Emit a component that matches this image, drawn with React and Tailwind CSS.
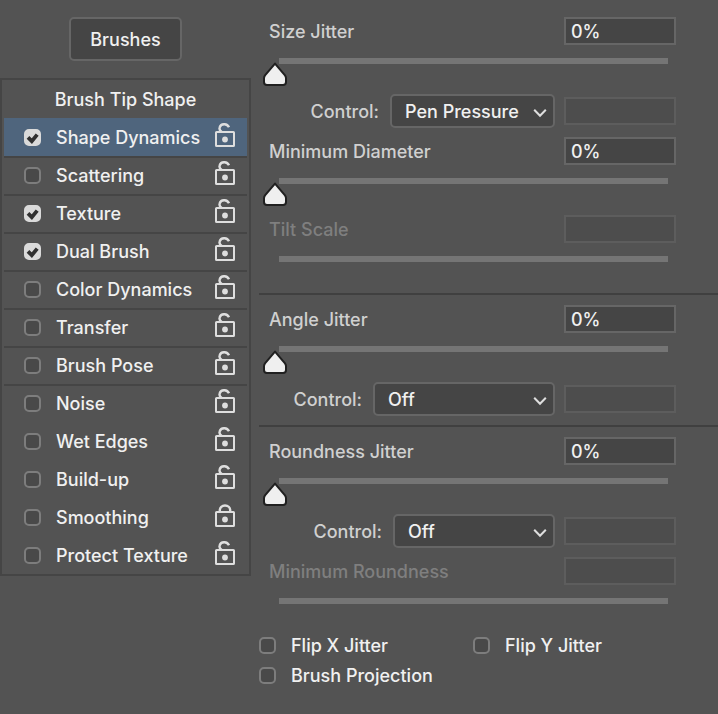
import React, { useState } from "react";

const brushOptions = [
  { name: "Shape Dynamics", checked: true, divider: false },
  { name: "Scattering", checked: false, divider: true },
  { name: "Texture", checked: true, divider: true },
  { name: "Dual Brush", checked: true, divider: true },
  { name: "Color Dynamics", checked: false, divider: true },
  { name: "Transfer", checked: false, divider: true },
  { name: "Brush Pose", checked: false, divider: true },
  { name: "Noise", checked: false, divider: true },
  { name: "Wet Edges", checked: false, divider: false },
  { name: "Build-up", checked: false, divider: false },
  { name: "Smoothing", checked: false, divider: false, locked: true },
  { name: "Protect Texture", checked: false, divider: false },
];

const LockIcon = ({ locked }) => (
  <svg width="20" height="28" viewBox="0 0 20 28" fill="none">
    <rect x="1" y="9" width="18" height="14" rx="0.6" stroke="currentColor" strokeWidth="2" />
    <circle cx="10" cy="16.5" r="2.9" fill="currentColor" />
    <path
      d={
        locked
          ? "M4.8 9V7.4C4.8 4.5 7 2.5 10 2.5s5.2 2 5.2 4.9V9"
          : "M6.8 9C4.7 7.8 4.2 6 4.7 4.4C5.3 2.3 7.3 1.1 9.6 1.2c2.1.1 3.5 1.1 4.4 3"
      }
      stroke="currentColor"
      strokeWidth="2.4"
    />
  </svg>
);

const Checkbox = ({ id, defaultChecked }) => (
  <span className="relative flex w-[17px] h-[17px] shrink-0">
    <input
      id={id}
      type="checkbox"
      defaultChecked={defaultChecked}
      className="peer appearance-none w-full h-full rounded-[5px] border-2 border-[#7d7d7d] bg-[#494949] checked:border-[#dadada] checked:bg-[#dadada]"
    />
    <svg
      className="absolute inset-0 pointer-events-none hidden peer-checked:block"
      width="17"
      height="17"
      viewBox="0 0 17 17"
      fill="none"
    >
      <path d="M4 8.4l3.8 3.8 5.4-6.6" stroke="#303030" strokeWidth="3.8" />
    </svg>
  </span>
);

const NumberBox = ({ id, value, disabled, label, onChange }) => (
  <input
    id={id}
    type="text"
    aria-label={label}
    value={value}
    disabled={disabled}
    onChange={onChange}
    className="w-28 h-7 shrink-0 border-2 border-[#666666] bg-[#454545] px-[5px] text-[#f0f0f0] outline-none disabled:border-[#5d5d5d] disabled:bg-[#4d4d4d]"
  />
);

const SliderField = ({ id, label, disabled }) => {
  const [amount, setAmount] = useState(0);

  const handleText = (e) => {
    const next = parseInt(e.target.value, 10) || 0;
    setAmount(Math.min(100, Math.max(0, next)));
  };

  return (
    <div className="flex flex-col gap-[13px]">
      <div className="flex items-center justify-between pl-2.5 pr-[42px]">
        <label
          htmlFor={id}
          className={`pt-0.5 ${disabled ? "text-[#7f7f7f]" : "text-[#d0d0d0]"}`}
        >
          {label}
        </label>
        <NumberBox
          id={id}
          value={disabled ? "" : `${amount}%`}
          disabled={disabled}
          onChange={handleText}
        />
      </div>
      <div className="relative h-7 ml-1 mr-[38px]">
        <div className="h-1.5 ml-4 mr-3 bg-[#757575]" />
        {!disabled && (
          <div
            className="absolute top-1 left-0"
            style={{ left: `calc((100% - 24px) * ${amount / 100})` }}
          >
            <svg width="24" height="24" viewBox="0 0 24 24">
              <path
                d="M12 1.6L21.8 13.2Q23 14.8 23 16.2V20Q23 23 20 23H4Q1 23 1 20V16.2Q1 14.8 2.2 13.2Z"
                fill="#efefef"
                stroke="#202020"
                strokeWidth="2"
                strokeLinejoin="round"
              />
            </svg>
          </div>
        )}
        <input
          type="range"
          min="0"
          max="100"
          value={amount}
          disabled={disabled}
          aria-label={label}
          onChange={(e) => setAmount(Number(e.target.value))}
          className="absolute inset-0 w-full h-full opacity-0"
        />
      </div>
    </div>
  );
};

const ControlField = ({ id, value, width }) => (
  <div className="-mt-px flex items-center justify-end pr-[42px]">
    <label htmlFor={id} className="mr-[11px] pt-0.5 text-[#d0d0d0]">
      Control:
    </label>
    <div className={`relative mr-[9px] ${width}`}>
      <select
        id={id}
        defaultValue={value}
        className="block appearance-none w-full h-[34px] rounded-[5px] border-2 border-[#666666] bg-[#454545] pl-[13px] pt-0.5 text-[#f0f0f0] outline-none"
      >
        <option>Off</option>
        <option>Fade</option>
        <option>Pen Pressure</option>
        <option>Pen Tilt</option>
      </select>
      <svg
        className="absolute right-2 top-3.5 pointer-events-none"
        width="14"
        height="10"
        viewBox="0 0 14 10"
        fill="none"
      >
        <path d="M1.2 1.7L7 7.7l5.8-6" stroke="#dedede" strokeWidth="2" />
      </svg>
    </div>
    <NumberBox value="" disabled label="Fade steps" />
  </div>
);

const FlipOption = ({ id, label }) => (
  <div className="flex items-center gap-[15px] h-[30px]">
    <Checkbox id={id} />
    <label htmlFor={id} className="pt-0.5 text-[#f0f0f0]">
      {label}
    </label>
  </div>
);

const App = () => {
  return (
    <div className="min-h-screen flex gap-2 bg-[#535353] pt-[17px] font-['Inter',sans-serif] font-medium text-[18px] leading-6">
      <aside className="w-[251px] shrink-0">
        <button className="block mx-auto h-11 px-[19px] pt-0.5 rounded-[5px] border-2 border-[#666666] bg-[#454545] text-[#f0f0f0]">
          Brushes
        </button>
        <div className="mt-[17px] border-2 border-[#454545] px-0.5 text-[#f0f0f0]">
          <button className="block w-full h-[38px] pt-0.5">Brush Tip Shape</button>
          <ul>
            {brushOptions.map((item, i) => (
              <li
                key={item.name}
                className={`flex items-center h-[38px] border-t-2 pb-0.5 pl-5 pr-3 ${
                  item.divider ? "border-[#454545]" : "border-transparent"
                } ${i === 0 ? "bg-[#4f657d]" : ""}`}
              >
                <Checkbox id={`brush-${i}`} defaultChecked={item.checked} />
                <label
                  htmlFor={`brush-${i}`}
                  className="ml-[15px] pt-0.5 flex-1 whitespace-nowrap"
                >
                  {item.name}
                </label>
                <button
                  aria-label={`${item.locked ? "Unlock" : "Lock"} ${item.name}`}
                  className="text-[#dedede]"
                >
                  <LockIcon locked={item.locked} />
                </button>
              </li>
            ))}
          </ul>
        </div>
      </aside>

      <main className="flex-1 min-w-0">
        <section className="flex flex-col gap-[9px] pb-[9px]">
          <SliderField id="size-jitter" label="Size Jitter" />
          <ControlField id="size-control" value="Pen Pressure" width="w-[165px]" />
          <SliderField id="min-diameter" label="Minimum Diameter" />
          <SliderField id="tilt-scale" label="Tilt Scale" disabled />
        </section>
        <section className="flex flex-col gap-[9px] border-t-2 border-[#404040] pt-2.5 pb-[9px]">
          <SliderField id="angle-jitter" label="Angle Jitter" />
          <ControlField id="angle-control" value="Off" width="w-[182px]" />
        </section>
        <section className="flex flex-col gap-[9px] border-t-2 border-[#404040] pt-2.5">
          <SliderField id="roundness-jitter" label="Roundness Jitter" />
          <ControlField id="roundness-control" value="Off" width="w-[162px]" />
          <SliderField id="min-roundness" label="Minimum Roundness" disabled />
        </section>
        <div className="mt-1 mr-[31px] grid grid-cols-2">
          <FlipOption id="flip-x" label="Flip X Jitter" />
          <FlipOption id="flip-y" label="Flip Y Jitter" />
          <FlipOption id="brush-projection" label="Brush Projection" />
        </div>
      </main>
    </div>
  );
};

export default App;
